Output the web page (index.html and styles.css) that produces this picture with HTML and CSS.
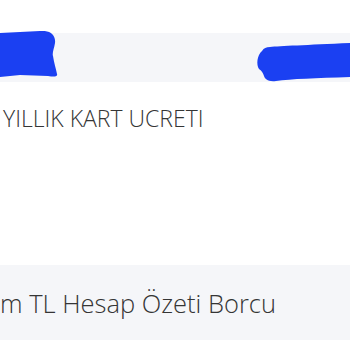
FILE: index.html
```html
<!DOCTYPE html>
<html lang="tr">
<head>
<meta charset="utf-8">
<link rel="stylesheet" href="styles.css">
</head>
<body>
<div class="page">
  <div class="band band-top">
    <svg class="scribble scribble-left" width="60" height="50" viewBox="0 0 60 50">
      <path d="M0 2 L40 0 C50 -1 56 4 55 12 C54 18 52 22 53 25 C54 32 56 38 57 43 C58 46 54 46 48 45 L20 44 L0 46 Z" fill="#1b40f2"/>
    </svg>
    <svg class="scribble scribble-right" width="94" height="40" viewBox="0 0 94 40">
      <path d="M14 4 C24 3 50 2 94 0 L94 34 C60 35 35 36 20 38 C12 39 9 36 8 33 C7 30 6 28 3 26 C0 22 1 12 6 8 C8 5 10 4 14 4 Z" fill="#1b40f2"/>
    </svg>
  </div>
  <div class="label">YILLIK KART UCRETI</div>
  <div class="band band-bottom">
    <div class="row-title">m TL Hesap Özeti Borcu</div>
  </div>
</div>
</body>
</html>
```

FILE: styles.css
```css
html, body {
  margin: 0;
  padding: 0;
  background: #ffffff;
}
.page {
  width: 350px;
  height: 350px;
  overflow: hidden;
  padding-top: 33px;
  box-sizing: border-box;
  font-family: "Open Sans", "Noto Sans", sans-serif;
  color: #353535;
}
.band {
  background: #f5f6f9;
  position: relative;
}
.band-top {
  height: 49px;
}
.scribble {
  position: absolute;
  display: block;
}
.scribble-left {
  left: 0;
  top: -2px;
}
.scribble-right {
  left: 256px;
  top: 10px;
}
.label {
  font-size: 23px;
  font-weight: 300;
  line-height: 30px;
  margin-top: 21px;
  padding-left: 3px;
}
.band-bottom {
  margin-top: 132px;
  height: 75px;
  display: flex;
  align-items: center;
}
.row-title {
  font-size: 25.5px;
  font-weight: 300;
  line-height: 34px;
}
```
